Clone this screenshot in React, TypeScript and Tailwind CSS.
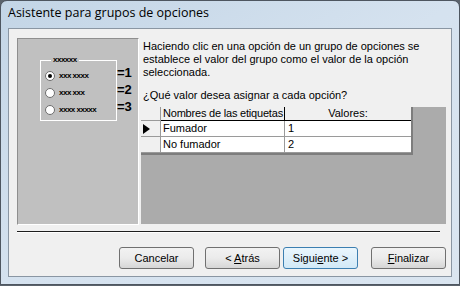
import React from 'react';

const ui = { fontFamily: '"Liberation Sans", Arial, sans-serif' };

function Radio({ checked }: { checked?: boolean }) {
  return (
    <span className="flex h-[10px] w-[10px] shrink-0 items-center justify-center rounded-full border border-[#6d6d6d] bg-white">
      {checked && <span className="h-[4px] w-[4px] rounded-full bg-black" />}
    </span>
  );
}

function Preview() {
  const opts = ['xxx xxxx', 'xxx xxx', 'xxxx xxxxx'];
  return (
    <div className="relative h-[187px] w-[122px] shrink-0 border border-b-white border-l-[#8f8f8f] border-r-white border-t-[#8f8f8f] bg-[#c0c0c0]">
      <div className="absolute left-[22px] top-[21px] h-[61px] w-[77px] border border-white">
        <span className="absolute -top-[6px] left-[10px] bg-[#c0c0c0] px-[2px] text-[8px] font-bold leading-[10px] tracking-[-0.5px]">
          xxxxxx
        </span>
        <div className="flex flex-col gap-[7px] pl-[4px] pt-[10px]">
          {opts.map((o, i) => (
            <div key={o} className="flex h-[10px] items-center gap-[4px]">
              <Radio checked={i === 0} />
              <span className="whitespace-nowrap text-[8px] font-bold leading-none tracking-[-0.5px]">{o}</span>
            </div>
          ))}
        </div>
      </div>
      <div className="absolute left-[99px] top-[27px] flex flex-col gap-[4px] text-[13px] font-bold leading-[13px]">
        <span>=1</span>
        <span>=2</span>
        <span>=3</span>
      </div>
    </div>
  );
}

function Datasheet() {
  const rows = [
    { name: 'Fumador', val: '1', current: true },
    { name: 'No fumador', val: '2', current: false },
  ];
  return (
    <div className="h-[117px] w-[305px] bg-[#ababab]">
      <div className="w-[272px] border-b-2 border-r-2 border-[#7d7d7d]">
        <div className="flex h-[14px] text-[11px] leading-[13px]">
          <div className="w-[20px] shrink-0 border-b border-r border-[#9a9a9a] bg-[#f0f0f0]" />
          <div className="w-[124px] shrink-0 overflow-hidden whitespace-nowrap border-b border-r border-black bg-[#f0f0f0] pl-[2px] tracking-[-0.2px]">
            Nombres de las etiquetas
          </div>
          <div className="flex-1 border-b border-black bg-[#f0f0f0] text-center">Valores:</div>
        </div>
        {rows.map((r) => (
          <div key={r.name} className="flex h-[16px] text-[11px] leading-[15px]">
            <div className="flex w-[20px] shrink-0 items-center border-b border-r border-[#9a9a9a] bg-[#f0f0f0] pl-[2px]">
              {r.current && (
                <svg width="7" height="10" viewBox="0 0 7 10">
                  <path d="M0 0 L7 5 L0 10 Z" fill="#000" />
                </svg>
              )}
            </div>
            <div className="w-[124px] shrink-0 border-b border-r border-[#9a9a9a] bg-white pl-[2px]">{r.name}</div>
            <div className="flex-1 border-b border-[#9a9a9a] bg-white pl-[3px]">{r.val}</div>
          </div>
        ))}
      </div>
    </div>
  );
}

function Btn({ children, def, className = '' }: { children: React.ReactNode; def?: boolean; className?: string }) {
  return (
    <button
      className={`flex h-[22px] w-[75px] items-center justify-center rounded-[3px] border text-[11px] text-black ${
        def
          ? 'border-[#3c7fb1] bg-gradient-to-b from-[#eaf6fd] to-[#d2e9f7]'
          : 'border-[#707070] bg-gradient-to-b from-[#f2f2f2] via-[#ebebeb] to-[#d6d6d6]'
      } ${className}`}
    >
      <span className="whitespace-pre">{children}</span>
    </button>
  );
}

export default function App() {
  return (
    <div className="h-[286px] w-[460px] bg-[#5b636c]" style={ui}>
      <div className="flex h-[285px] w-[460px] flex-col rounded-t-[7px] border border-[#4e5660] bg-gradient-to-br from-[#c3d5e6] via-[#d5e2ef] to-[#dae5f0] px-[7px] pb-[7px] pt-[27px]">
        <div className="absolute left-[8px] top-[4px] text-[12.5px] leading-[18px] text-black" style={{ fontFamily: '"Open Sans", "Noto Sans", sans-serif' }}>
          Asistente para grupos de opciones
        </div>
        <div className="flex flex-1 flex-col border border-[#8a96a3] bg-[#f0f0f0]">
          <div className="flex gap-[2px] pl-[8px] pt-[9px]">
            <Preview />
            <div className="flex w-[305px] shrink-0 flex-col">
              <p className="pl-[2px] pt-[2px] text-[11px] leading-[13px] text-black">
                Haciendo clic en una opción de un grupo de opciones se
                <br />
                establece el valor del grupo como el valor de la opción
                <br />
                seleccionada.
              </p>
              <p className="pl-[2px] pt-[10px] text-[11px] leading-[13px] text-black">¿Qué valor desea asignar a cada opción?</p>
              <div className="pt-[5px]">
                <Datasheet />
              </div>
            </div>
          </div>
          <div className="ml-[8px] mt-[6px] h-[2px] w-[423px] border-b border-t border-b-white border-t-[#1e1e1e]" />
          <div className="flex pl-[110px] pt-[14px]">
            <Btn>Cancelar</Btn>
            <Btn className="ml-[11px]">
              {'< '}
              <u>A</u>trás
            </Btn>
            <Btn def className="ml-[3px]">
              Sigui<u>e</u>nte &gt;
            </Btn>
            <Btn className="ml-[13px]">
              <u>F</u>inalizar
            </Btn>
          </div>
        </div>
      </div>
    </div>
  );
}
